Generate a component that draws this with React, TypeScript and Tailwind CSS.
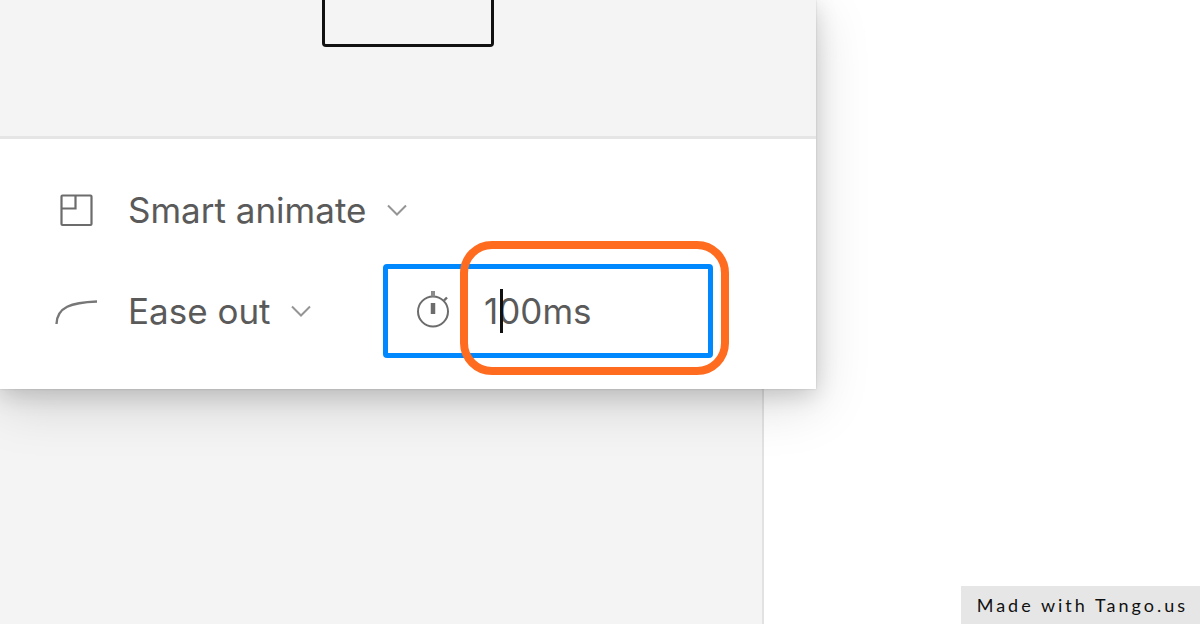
import { useState } from 'react';
import type { ReactNode } from 'react';

function Chevron() {
  return (
    <svg className="pointer-events-none h-3 w-6 shrink-0" viewBox="0 0 24 12" fill="none" aria-hidden="true">
      <path d="M3 1.5L12 10.5L21 1.5" stroke="#959595" strokeWidth="2" />
    </svg>
  );
}

function SmartAnimateIcon() {
  return (
    <svg className="h-9 w-9" viewBox="0 0 36 36" fill="none" stroke="#6c6c6c" strokeWidth="2.2" aria-hidden="true">
      <rect x="3.5" y="3.5" width="30" height="29.5" rx="1" />
      <path d="M3.5 16.5H17.5V3.5" />
    </svg>
  );
}

function EaseOutIcon() {
  return (
    <svg className="h-9 w-11" viewBox="0 0 44 36" fill="none" aria-hidden="true">
      <path d="M2.5 31C3 14 17 9.5 43 8.5" stroke="#777777" strokeWidth="2.4" />
    </svg>
  );
}

function StopwatchIcon() {
  return (
    <svg className="h-10 w-9 shrink-0" viewBox="0 0 36 40" fill="none" stroke="#6c6c6c" aria-hidden="true">
      <circle cx="17" cy="20.5" r="15" strokeWidth="2" />
      <path d="M17 0V5.5" strokeWidth="4" stroke="#8c8c8c" />
      <path d="M28 9.5L31 6.5" strokeWidth="2.4" />
      <path d="M17 12V23" strokeWidth="4.5" />
    </svg>
  );
}

function Dropdown({ icon, label, value }: { icon: ReactNode; label: string; value: string }) {
  return (
    <label className="flex items-center">
      <span className="mr-[30px] flex w-11 justify-center">{icon}</span>
      <select
        aria-label={label}
        defaultValue={value}
        className="mr-[18px] cursor-pointer appearance-none bg-transparent outline-none"
      >
        <option>{value}</option>
      </select>
      <Chevron />
    </label>
  );
}

export default function App() {
  const [duration, setDuration] = useState('100ms');

  return (
    <div className="relative flex min-h-screen overflow-hidden bg-white font-['Inter',sans-serif] text-[35px] leading-10 text-[#5a5a5a]">
      <div className="w-[63.7%] border-r-2 border-[#e2e2e2] bg-[#f4f4f4]" />

      <section
        aria-label="Animation"
        className="absolute top-0 left-0 w-[68%] bg-white shadow-[0_0_2px_rgba(0,0,0,0.15),0_6px_21px_rgba(0,0,0,0.15),0_15px_51px_rgba(0,0,0,0.15)]"
      >
        <div className="flex justify-center border-b-3 border-[#e5e5e5] bg-[#f4f4f4] pb-[89px]">
          <div className="h-[47px] w-[172px] rounded-b-[4px] border-3 border-t-0 border-[#111111]" />
        </div>

        <div className="flex flex-col gap-[19px] pt-9 pr-[103px] pb-[31px] pl-[54px]">
          <div className="flex h-[70px] items-center">
            <Dropdown icon={<SmartAnimateIcon />} label="Animation type" value="Smart animate" />
          </div>

          <div className="flex items-center justify-between">
            <Dropdown icon={<EaseOutIcon />} label="Easing" value="Ease out" />
            <label className="relative flex h-[94px] w-[330px] items-center rounded-[4px] border-5 border-[#0088ff] bg-white pl-7">
              <StopwatchIcon />
              <input
                aria-label="Duration"
                value={duration}
                onChange={(event) => setDuration(event.target.value)}
                className="ml-8 w-full min-w-0 bg-transparent outline-none"
              />
              <span className="absolute top-5 left-[112px] h-11 w-[3px] bg-[#111111]" />
              <span className="absolute -top-7 -right-[21px] -bottom-[22px] left-[72px] rounded-[32px] border-8 border-[#ff6b1f]" />
            </label>
          </div>
        </div>
      </section>

      <footer className="absolute right-0 bottom-0 bg-[#e6e6e6] py-[7px] pr-3 pl-4 font-['Lato',sans-serif] text-lg leading-6 tracking-[3px] text-[#111111]">
        Made with Tango.us
      </footer>
    </div>
  );
}
